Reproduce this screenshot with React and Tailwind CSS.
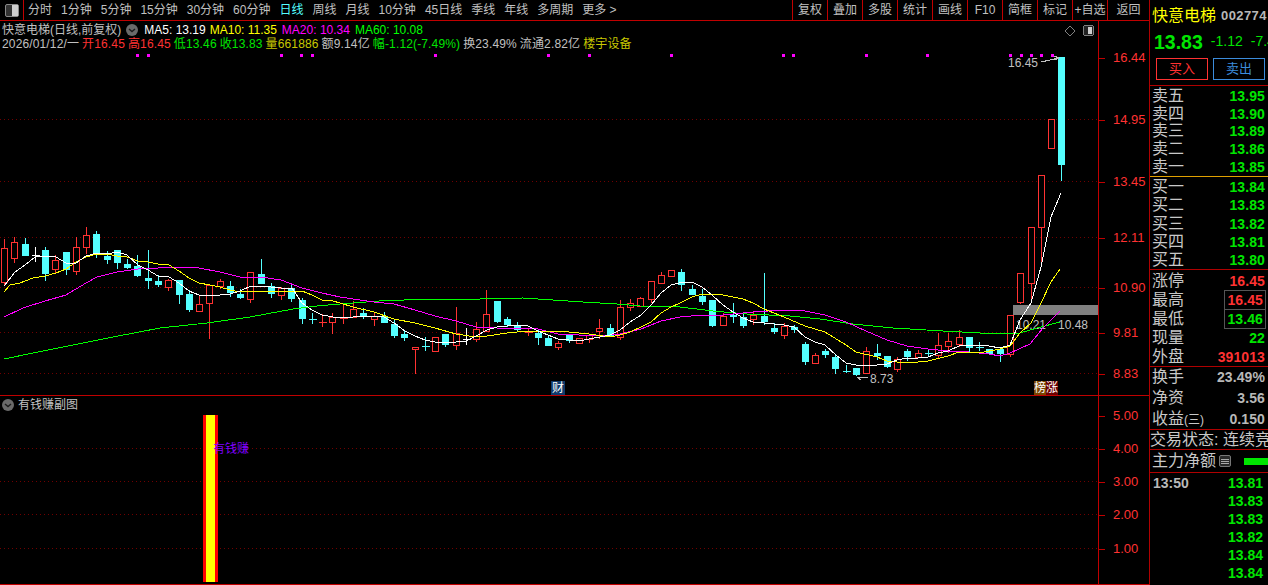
const RED = "#ff3232";
const CYAN = "#54ffff";

// [kind, bodyTop, bodyBottom, high, low]  r = red hollow, c = cyan solid, rx/cx/wx = crosses
const CANDLES = [
  ["r",248,282,239,286],["r",242,258,237,263],["c",244,256,238,256],["wx",255,255,247,262],["c",250,274,247,281],
  ["r",260,269,255,273],["c",252,270,252,275],["r",247,271,237,275],["r",235,247,227,254],["c",234,254,231,258],
  ["c",256,260,251,264],["c",250,263,250,269],["c",264,268,259,269],["c",266,276,255,277],["c",278,281,250,289],
  ["c",281,285,275,287],["r",280,287,279,291],["c",280,295,280,304],["c",294,310,290,312],["r",304,311,295,312],
  ["r",285,303,285,339],["r",281,286,279,289],["c",286,293,281,297],["c",294,298,289,299],["r",272,299,272,303],
  ["c",274,284,259,284],["c",286,294,283,298],["r",288,295,287,300],["c",288,299,285,302],["c",300,319,298,324],
  ["cx",319,319,313,324],["rx",322,322,314,327],["r",317,322,313,334],["rx",318,319,304,324],["r",309,317,301,317],
  ["c",313,317,308,319],["r",316,319,312,326],["c",316,323,312,323],["c",324,336,320,338],["c",334,338,331,341],
  ["r",347,349,349,374],["cx",346,346,337,351],["r",337,351,337,351],["c",334,345,334,347],["r",333,345,307,350],
  ["wx",339,339,328,345],["r",329,339,322,342],["r",314,331,290,331],["c",301,322,301,323],["c",319,325,317,327],
  ["c",325,330,322,332],["rx",332,333,328,336],["c",333,338,329,345],["c",338,346,336,346],["r",343,347,341,350],
  ["c",335,341,335,343],["r",338,343,338,343],["r",335,339,335,343],["r",328,331,319,339],["c",328,336,324,337],
  ["r",307,337,300,340],["r",303,307,299,311],["r",298,306,297,306],["r",281,299,281,303],["r",275,283,272,283],
  ["r",270,276,270,277],["c",272,285,269,291],["c",289,295,285,295],["c",296,302,289,305],["c",300,326,300,327],
  ["r",316,325,313,326],["c",315,317,303,323],["c",317,326,314,328],["r",315,319,312,325],["c",316,322,273,325],
  ["c",328,332,323,334],["r",326,335,323,339],["c",327,330,325,333],["c",344,362,342,365],["r",355,363,353,363],
  ["c",351,355,349,358],["c",357,369,355,374],["cx",371,371,365,373],["c",368,375,368,376],["r",351,373,347,373],
  ["c",353,356,344,360],["c",356,367,356,368],["r",359,369,357,372],["c",351,357,349,361],["r",353,357,350,358],
  ["cx",353,353,349,357],["r",345,355,333,359],["r",341,346,333,353],["r",337,344,330,347],["c",337,348,337,352],
  ["cx",347,347,342,351],["c",349,354,349,354],["c",349,354,347,362],["r",315,354,315,357],["r",273,302,273,304],
  ["r",227,283,227,303],["r",175,227,175,267],["r",119,148,119,148],["c",57,165,57,181],
];

const MA5 = "4,286 15,272 25,265 35,257 45,256 56,257 66,263 76,263 86,256 97,253 107,254 117,252 127,255 138,265 148,270 158,276 169,277 179,283 189,291 199,295 210,295 220,295 230,294 240,291 251,286 261,286 271,287 281,288 292,288 302,303 312,310 322,315 333,317 343,318 353,317 364,316 374,316 384,317 394,323 405,331 415,336 425,340 435,342 446,342 456,342 466,341 476,336 487,330 497,327 507,326 517,325 528,326 538,331 548,335 558,339 569,340 579,341 589,339 600,337 610,335 620,330 630,322 641,315 651,305 661,293 671,285 683,282 692,282 702,287 712,295 723,305 733,312 743,318 753,322 764,323 774,324 784,325 794,327 805,337 815,342 825,345 836,355 846,363 856,365 866,365 877,365 887,364 897,360 907,358 918,358 928,357 938,353 948,351 959,346 969,345 979,345 989,346 1000,348 1010,345 1020,320 1031,303 1041,267 1051,217 1061,193";
const MA10 = "4,292 10,285 20,283 33,278 45,276 56,273 66,269 76,262 86,257 97,254 107,254 117,256 127,257 138,261 148,262 158,264 169,265 179,271 189,278 199,283 210,285 220,287 230,290 240,292 251,291 261,291 271,292 281,291 292,291 302,291 312,295 322,300 333,301 340,303 353,307 374,312 394,319 415,323 435,328 456,334 476,337 487,336 507,333 528,331 548,331 569,332 589,334 610,337 620,335 630,332 641,327 651,322 661,313 671,307 680,303 692,297 702,294 712,294 723,295 743,299 753,303 764,309 784,317 805,326 825,332 846,345 856,352 877,357 887,361 897,362 918,362 928,361 948,356 959,352 979,353 1000,349 1010,346 1020,333 1031,323 1041,303 1051,282 1060,269";
const MA20 = "4,317 23,308 45,301 66,295 86,283 97,277 117,272 138,269 158,268 179,267 199,268 220,272 240,277 261,277 281,280 302,288 322,293 340,297 353,299 374,302 394,304 415,310 435,316 456,321 476,327 497,328 517,328 538,329 558,334 579,335 600,336 620,334 641,329 661,321 680,317 702,315 723,315 753,312 784,310 805,311 825,315 846,322 866,331 887,340 907,346 928,349 948,351 969,352 989,354 1000,356 1010,353 1030,344 1043,328 1060,311";
const MA60 = "4,359 33,353 73,345 113,337 160,328 207,323 250,317 293,309 317,306 340,304 379,301 430,299 480,299 523,298 553,300 583,302 617,304 640,306 680,307 713,311 747,314 790,316 820,319 853,324 893,328 943,331 980,333 1000,334 1020,333 1037,328 1060,322";

const UPPER_GRID = [119, 181, 237, 287, 332, 373];
const UPPER_AXIS = [["16.44",58],["14.95",120],["13.45",182],["12.11",238],["10.90",288],["9.81",333],["8.83",374]];
const LOWER_AXIS = [["5.00",416],["4.00",449],["3.00",482],["2.00",515],["1.00",549]];
const DOTS = [137,148,281,301,312,435,548,589,671,783,793,866,927,1010,1021,1031,1041,1052];

const PERIODS = ["分时","1分钟","5分钟","15分钟","30分钟","60分钟","日线","周线","月线","10分钟","45日线","季线","年线","多周期","更多 >"];
const TOOLS = ["复权","叠加","多股","统计","画线","F10","简框","标记","+自选","返回"];

function Candle({ data, index }) {
  const [kind, top, bottom, high, low] = data;
  const x = Math.round(4 + index * 10.265) + 0.5;
  if (kind.endsWith("x")) {
    const color = kind === "wx" ? "#ffffff" : kind === "rx" ? RED : CYAN;
    return (
      <g stroke={color}>
        <line x1={x} x2={x} y1={high} y2={low} />
        <line x1={x - 4} x2={x + 4} y1={top + 0.5} y2={top + 0.5} />
      </g>
    );
  }
  if (kind === "c") {
    return (
      <g>
        <line x1={x} x2={x} y1={high} y2={low} stroke={CYAN} />
        <rect x={x - 3.5} y={top} width={7} height={bottom - top} fill={CYAN} />
      </g>
    );
  }
  return (
    <g stroke={RED}>
      <line x1={x} x2={x} y1={high} y2={top} />
      <line x1={x} x2={x} y1={bottom} y2={low} />
      <rect x={x - 3} y={top + 0.5} width={6} height={bottom - top} fill="#000" />
    </g>
  );
}

function GridLine({ y }) {
  return <line x1="0" x2="1098" y1={y + 0.5} y2={y + 0.5} stroke="#700000" strokeDasharray="1 3" />;
}

function ChevronDot({ className }) {
  return (
    <svg viewBox="0 0 12 12" className={className}>
      <circle cx="6" cy="6" r="6" fill="#6a6a6a" />
      <path d="M3 5l3 2.5L9 5" fill="none" stroke="#1c1c1c" strokeWidth="1.4" />
    </svg>
  );
}

function AxisLabels({ items, top }) {
  return items.map(([label, y]) => (
    <div key={label} className="absolute left-0 flex items-center" style={{ top: y - top - 8 }}>
      <span className="h-px w-[6px] bg-[#c00000]" />
      <span className="ml-[8px] text-[13px] leading-[16px] text-[#ff3232]">{label}</span>
    </div>
  ));
}

function Row({ label, value, color = "text-[#00e600]", boxed }) {
  return (
    <div className="flex h-full items-center justify-between pl-[2px] pr-[3px]">
      <span className="text-[16px] leading-none text-[#c8c8c8]">{label}</span>
      <span className={`text-[14px] font-bold leading-none tracking-[0.1px] ${color} ${boxed ? "border border-[#555] px-[2px] py-[2px] -mr-[1px]" : ""}`}>{value}</span>
    </div>
  );
}

function QuoteBlock({ rows, className }) {
  return (
    <div className={`flex shrink-0 flex-col ${className}`}>
      {rows.map((r, i) => (
        <div key={i} className="flex-1 min-h-0">
          <Row {...r} />
        </div>
      ))}
    </div>
  );
}

export default function App() {
  const sell = [["卖五","13.95"],["卖四","13.90"],["卖三","13.89"],["卖二","13.86"],["卖一","13.85"]].map(([label, value]) => ({ label, value }));
  const buy = [["买一","13.84"],["买二","13.83"],["买三","13.82"],["买四","13.81"],["买五","13.80"]].map(([label, value]) => ({ label, value }));
  const ticks = ["13.81","13.83","13.83","13.82","13.84","13.84"];

  return (
    <div className="flex h-[585px] w-[1268px] overflow-hidden bg-black font-['Liberation_Sans','Noto_Sans_CJK_SC',sans-serif] text-[#c0c0c0]">
      <div className="flex w-[1150px] shrink-0 flex-col border-r border-[#b00000]">
        {/* toolbar */}
        <div className="flex h-[21px] shrink-0 items-center border-b border-[#c00000] text-[12px]">
          <div className="flex h-full w-[24px] shrink-0 items-center justify-center border-r border-[#c00000]">
            <div className="flex h-[13px] w-[14px] justify-end rounded-[2px] border border-[#8a8a8a] bg-[#333]">
              <div className="w-[6px] bg-[#cfcfcf]" />
            </div>
          </div>
          <div className="ml-[4px] flex gap-[9px]">
            {PERIODS.map((p) => (
              <span key={p} className={p === "日线" ? "text-[#54ffff]" : ""}>{p}</span>
            ))}
          </div>
          <div className="ml-auto flex h-full">
            {TOOLS.map((t) => (
              <div key={t} className={`flex items-center justify-center border-l border-[#c00000] ${t === "返回" ? "w-[42px]" : "w-[35px]"}`}>{t}</div>
            ))}
          </div>
        </div>

        {/* price panel */}
        <div className="flex h-[375px] shrink-0 border-b border-[#c00000]">
          <div className="relative w-[1098px] shrink-0">
            <svg width="1098" height="374" viewBox="0 21 1098 374" shapeRendering="crispEdges" className="absolute inset-0">
              {UPPER_GRID.map((y) => <GridLine key={y} y={y} />)}
              {DOTS.map((x) => <rect key={x} x={x - 1} y={54} width={3} height={3} fill="#ff00ff" />)}
              <text x="1016" y="329" fontSize="12" fill="#c0c0c0">10.21</text>
              <text x="1058" y="329" fontSize="12" fill="#c0c0c0">10.48</text>
              <rect x="1013" y="305" width="85" height="10" fill="#808080" />
              {CANDLES.map((c, i) => <Candle key={i} data={c} index={i} />)}
              <polyline points={MA60} fill="none" stroke="#00ff00" />
              <polyline points={MA20} fill="none" stroke="#ff00ff" />
              <polyline points={MA10} fill="none" stroke="#ffff00" />
              <polyline points={MA5} fill="none" stroke="#ffffff" />
              <text x="1008" y="67" fontSize="12" fill="#c0c0c0">16.45</text>
              <path d="M1041 62L1059 58M1054 56l5 2-5 2" fill="none" stroke="#c0c0c0" />
              <text x="870" y="383" fontSize="12" fill="#c0c0c0">8.73</text>
              <path d="M857 377H868M857 377l4 3" fill="none" stroke="#c0c0c0" />
              <path d="M1070 26l5 5-5 5-5-5z" fill="none" stroke="#808080" />
              <rect x="1083.5" y="25.5" width="10" height="10" rx="2" fill="#222" stroke="#808080" />
              <rect x="1088" y="27" width="4" height="7" fill="#cfcfcf" />
            </svg>
            <div className="absolute left-[2px] top-[2px] flex items-center text-[12px] leading-[14px]">
              <span>快意电梯(日线,前复权)</span>
              <ChevronDot className="ml-[5px] h-[12px] w-[12px]" />
              <span className="ml-[6px] text-white">MA5: 13.19</span>
              <span className="ml-[4px] text-[#ffff00]">MA10: 11.35</span>
              <span className="ml-[5px] text-[#ff00ff]">MA20: 10.34</span>
              <span className="ml-[5px] text-[#00ff00]">MA60: 10.08</span>
            </div>
            <div className="absolute left-[2px] top-[16px] flex gap-[3px] whitespace-nowrap text-[12px] leading-[14px] tracking-[0.14px]">
              <span>2026/01/12/一</span>
              <span className="text-[#ff3232]">开16.45</span>
              <span className="text-[#ff3232]">高16.45</span>
              <span className="text-[#00e600]">低13.46</span>
              <span className="text-[#00e600]">收13.83</span>
              <span className="text-[#c8c800]">量661886</span>
              <span>额9.14亿</span>
              <span className="text-[#00e600]">幅-1.12(-7.49%)</span>
              <span>换23.49%</span>
              <span>流通2.82亿</span>
              <span className="text-[#c8c800]">楼宇设备</span>
            </div>
            <span className="absolute left-[551px] top-[360px] bg-[#0f3a6b] px-px text-[12px] leading-[14px] text-white">财</span>
            <div className="absolute left-[1034px] top-[360px] flex text-[12px] leading-[14px] text-white">
              <span className="bg-[#7a4400]">榜</span>
              <span className="bg-[#6a0000]">涨</span>
            </div>
          </div>
          <div className="relative flex-1 border-l border-[#c00000]">
            <AxisLabels items={UPPER_AXIS} top={21} />
          </div>
        </div>

        {/* sub panel */}
        <div className="flex h-[189px] shrink-0 border-b border-[#c00000]">
          <div className="relative w-[1098px] shrink-0">
            <svg width="1098" height="188" viewBox="0 396 1098 188" shapeRendering="crispEdges" className="absolute inset-0">
              {[448, 481, 514, 548].map((y) => <GridLine key={y} y={y} />)}
              <rect x="201" y="415" width="19" height="168" fill="#000" />
              <rect x="203" y="415" width="15" height="167" fill="#ff0000" />
              <rect x="206" y="415" width="9" height="167" fill="#ffff00" />
            </svg>
            <div className="absolute left-[2px] top-[2px] flex items-center text-[12px] leading-[14px]">
              <ChevronDot className="h-[12px] w-[12px]" />
              <span className="ml-[4px]">有钱赚副图</span>
            </div>
            <span className="absolute left-[213px] top-[46px] text-[12px] leading-[14px] text-[#8000ff]">有钱赚</span>
          </div>
          <div className="relative flex-1 border-l border-[#c00000]">
            <AxisLabels items={LOWER_AXIS} top={396} />
          </div>
        </div>
      </div>

      {/* quote panel */}
      <div className="flex min-w-0 flex-1 flex-col">
        <div className="h-[86px] shrink-0 overflow-hidden border-b border-[#b00000]">
          <div className="mt-[6px] flex items-center whitespace-nowrap pl-[2px]">
            <span className="text-[16px] leading-[18px] text-[#ffff00]">快意电梯</span>
            <span className="ml-[5px] text-[13px] font-bold tracking-[0.4px] text-[#b8b8b8]">002774</span>
          </div>
          <div className="mt-[4px] flex items-center whitespace-nowrap pl-[4px] text-[#00e600]">
            <span className="text-[19.5px] font-bold leading-[24px]">13.83</span>
            <span className="ml-[8px] text-[14px]">-1.12</span>
            <span className="ml-[8px] text-[14px]">-7.49%</span>
          </div>
          <div className="mt-[4px] flex gap-[5px] pl-[6px] text-[13px]">
            <div className="flex h-[22px] w-[52px] items-center justify-center border border-[#ff3232] text-[#ff3232]">买入</div>
            <div className="flex h-[22px] w-[52px] items-center justify-center border border-[#3c8cdc] text-[#3c8cdc]">卖出</div>
          </div>
        </div>
        <QuoteBlock rows={sell} className="h-[91px] border-b border-[#e0a000] pt-px" />
        <QuoteBlock rows={buy} className="h-[93px] border-b border-[#b00000] pt-px" />
        <QuoteBlock
          className="h-[97px] border-b border-[#b00000] pt-[1px]"
          rows={[
            { label: "涨停", value: "16.45", color: "text-[#ff3232]" },
            { label: "最高", value: "16.45", color: "text-[#ff3232]", boxed: true },
            { label: "最低", value: "13.46", boxed: true },
            { label: "现量", value: "22" },
            { label: "外盘", value: "391013", color: "text-[#ff3232]" },
          ]}
        />
        <QuoteBlock
          className="h-[63px] border-b border-[#b00000]"
          rows={[
            { label: "换手", value: "23.49%", color: "text-[#b8b8b8]" },
            { label: "净资", value: "3.56", color: "text-[#b8b8b8]" },
            { label: <>收益<span className="text-[12px]">(三)</span></>, value: "0.150", color: "text-[#b8b8b8]" },
          ]}
        />
        <div className="flex h-[20px] shrink-0 items-center overflow-hidden whitespace-nowrap border-b border-[#b00000] text-[16px] leading-none text-[#c8c8c8]">
          交易状态: 连续竞价
        </div>
        <div className="flex h-[23px] shrink-0 items-center border-b border-[#b00000] pl-[2px] text-[16px] leading-none text-[#c8c8c8]">
          <span>主力净额</span>
          <div className="ml-[3px] flex h-[12px] w-[12px] flex-col justify-center gap-px rounded-[2px] border border-[#777] bg-[#2a2a2a] px-px">
            <span className="h-px bg-[#aaa]" />
            <span className="h-px bg-[#aaa]" />
            <span className="h-px bg-[#aaa]" />
          </div>
          <span className="ml-auto h-[7px] w-[24px] bg-[#00e600]" />
        </div>
        <div className="flex flex-1 flex-col pt-px text-[14px] font-bold leading-[18px]">
          {ticks.map((price, i) => (
            <div key={i} className="flex h-[18px] justify-between pl-[3px] pr-[5px]">
              <span className="text-[#b8b8b8]">{i === 0 ? "13:50" : ""}</span>
              <span className="text-[#00e600]">{price}</span>
            </div>
          ))}
        </div>
      </div>
    </div>
  );
}
